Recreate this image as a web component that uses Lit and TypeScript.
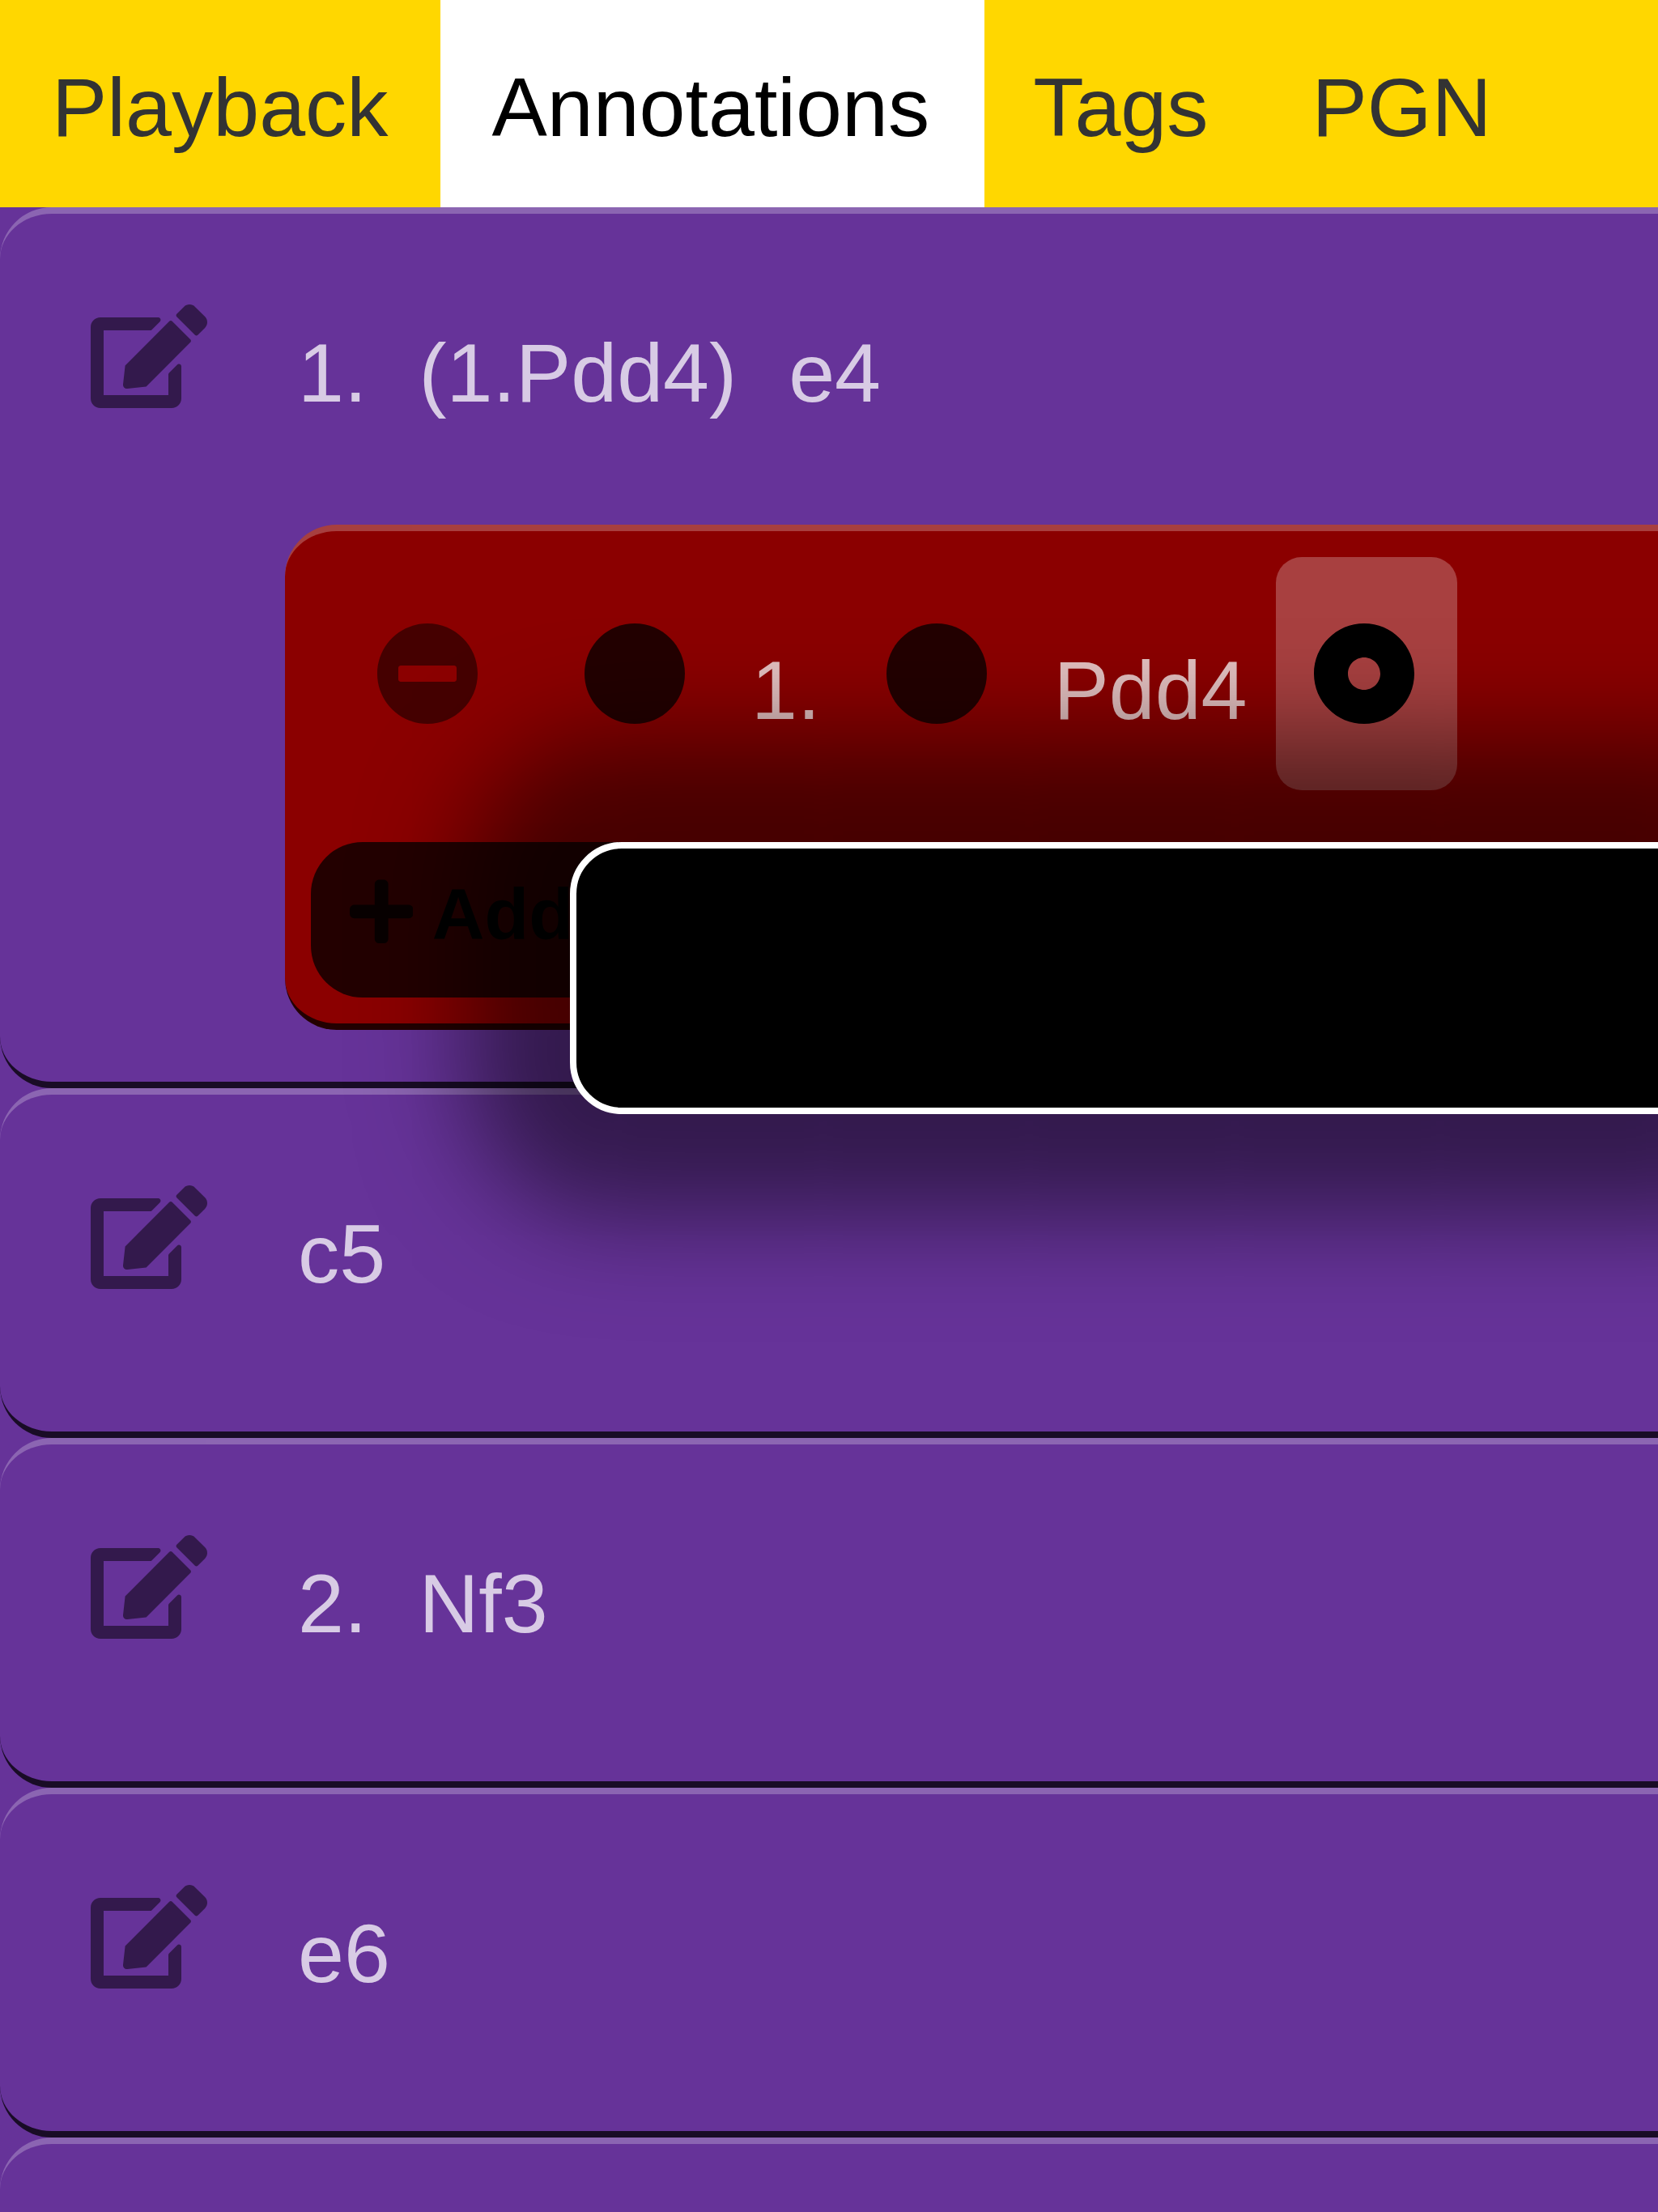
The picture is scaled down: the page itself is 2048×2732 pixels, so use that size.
import { LitElement, html, css, svg, nothing } from "lit";
import { customElement, property } from "lit/decorators.js";

const ICONS = {
  edit: {
    width: 576,
    path: "M402.6 83.2l90.2 90.2c3.8 3.8 3.8 10 0 13.8L274.4 405.6l-92.8 10.3c-12.4 1.4-22.9-9.1-21.5-21.5l10.3-92.8L388.8 83.2c3.8-3.8 10-3.8 13.8 0zm162-22.9l-48.8-48.8c-15.2-15.2-39.9-15.2-55.2 0l-35.4 35.4c-3.8 3.8-3.8 10 0 13.8l90.2 90.2c3.8 3.8 10 3.8 13.8 0l35.4-35.4c15.2-15.3 15.2-40 0-55.2zM384 346.2V448H64V128h229.8c3.2 0 6.2-1.3 8.5-3.5l40-40c7.6-7.6 2.2-20.5-8.5-20.5H48C21.5 64 0 85.5 0 112v352c0 26.5 21.5 48 48 48h352c26.5 0 48-21.5 48-48V306.2c0-10.7-12.9-16-20.5-8.5l-40 40c-2.2 2.3-3.5 5.3-3.5 8.5z",
  },
  minus: {
    width: 512,
    path: "M256 8C119 8 8 119 8 256s111 248 248 248 248-111 248-248S393 8 256 8zM124 296c-6.6 0-12-5.4-12-12v-56c0-6.6 5.4-12 12-12h264c6.6 0 12 5.4 12 12v56c0 6.6-5.4 12-12 12H124z",
  },
  circle: {
    width: 512,
    path: "M256 8C119 8 8 119 8 256s111 248 248 248 248-111 248-248S393 8 256 8z",
  },
  dot: {
    width: 512,
    path: "M256 8C119 8 8 119 8 256s111 248 248 248 248-111 248-248S393 8 256 8zm80 248c0 44.1-35.9 80-80 80s-80-35.9-80-80 35.9-80 80-80 80 35.9 80 80z",
  },
  plus: {
    width: 448,
    path: "M416 208H272V64c0-17.67-14.33-32-32-32h-32c-17.67 0-32 14.33-32 32v144H32c-17.67 0-32 14.33-32 32v32c0 17.67 14.33 32 32 32h144v144c0 17.67 14.33 32 32 32h32c17.67 0 32-14.33 32-32V304h144c17.67 0 32-14.33 32-32v-32c0-17.67-14.33-32-32-32z",
  },
};

@customElement("glyph-icon")
class GlyphIcon extends LitElement {
  static styles = css`
    :host {
      display: block;
      flex: none;
      height: 128px;
    }
    .glyph {
      display: block;
      height: 100%;
      fill: currentColor;
    }
  `;

  @property() name: keyof typeof ICONS = "circle";

  render() {
    const icon = ICONS[this.name];
    return html`<svg class="glyph" viewBox="0 0 ${icon.width} 512">
      ${svg`<path fill-rule="evenodd" d=${icon.path}></path>`}
    </svg>`;
  }
}

interface Move {
  parts: string[];
  variation?: boolean;
}

const MOVES: Move[] = [
  { parts: ["1.", "(1.Pdd4)", "e4"], variation: true },
  { parts: ["c5"] },
  { parts: ["2.", "Nf3"] },
  { parts: ["e6"] },
  { parts: [] },
];

@customElement("app-root")
class AppRoot extends LitElement {
  static styles = css`
    :host {
      display: block;
      font-family: "Liberation Sans", Arial, sans-serif;
      font-size: 102.4px;
    }
    .page {
      display: flex;
      flex-direction: column;
      height: 2732px;
      overflow: hidden;
      background: #663399;
    }
    .tabs {
      display: flex;
      flex: none;
      height: 256px;
      background: #ffd700;
    }
    .tab {
      box-sizing: border-box;
      flex: none;
      height: 256px;
      padding: 9px 60px 0 64px;
      line-height: 247px;
      color: #333;
      white-space: nowrap;
    }
    .tab.first {
      width: 544px;
      padding-right: 0;
    }
    .tab.active {
      width: 672px;
      padding-left: 63.4px;
      padding-right: 0;
      background: #fff;
      color: #000;
    }
    .tab.after {
      padding-left: 60.2px;
      padding-right: 64px;
    }
    .moves {
      position: relative;
      width: 2240px;
    }
    .move {
      box-sizing: border-box;
      height: 432px;
      border: 0 solid transparent;
      border-top: 8px solid rgba(255, 255, 255, 0.25);
      border-bottom: 8px solid rgba(0, 0, 0, 0.75);
      border-radius: 64px;
    }
    .move.expanded {
      height: 1088px;
    }
    .line {
      display: flex;
      align-items: flex-start;
      gap: 64px;
      height: 384px;
      padding-left: 112px;
    }
    .line .text {
      color: rgba(255, 255, 255, 0.75);
      line-height: 118px;
      padding-top: 138px;
      white-space: nowrap;
    }
    .edit {
      padding-top: 112px;
      margin-right: 48px;
      color: rgba(0, 0, 0, 0.5);
    }
    .variation {
      box-sizing: border-box;
      height: 624px;
      margin-left: 352px;
      background: #8b0000;
      border: 0 solid transparent;
      border-top: 8px solid rgba(255, 255, 255, 0.25);
      border-bottom: 8px solid rgba(0, 0, 0, 0.75);
      border-radius: 64px;
      padding: 32px;
      display: flex;
      flex-direction: column;
      justify-content: space-between;
    }
    .editor {
      display: flex;
      align-items: flex-start;
    }
    .editor .text {
      color: rgba(255, 255, 255, 0.75);
      line-height: 118px;
      padding-top: 106px;
      white-space: nowrap;
    }
    .tool {
      flex: none;
      padding: 80px 48px;
      color: rgba(0, 0, 0, 0.75);
    }
    .tool.remove {
      margin: 0 32px;
      color: rgba(0, 0, 0, 0.5);
    }
    .tool.pick {
      margin-right: 32px;
    }
    .tool.side {
      margin: 0 32px;
    }
    .tool.open {
      margin-left: 35.2px;
      padding-left: 45px;
      padding-right: 51px;
      border-radius: 32px;
      background: rgba(255, 255, 255, 0.25);
      color: #000;
    }
    .add {
      box-sizing: border-box;
      display: flex;
      align-items: flex-start;
      width: 480px;
      height: 192px;
      padding: 36px 48px 0;
      gap: 23.4px;
      border-radius: 64px;
      background: rgba(0, 0, 0, 0.75);
      font-size: 89.6px;
      font-weight: bold;
      color: #000;
    }
    .add glyph-icon {
      height: 89.6px;
      margin-top: 5.4px;
      color: rgba(0, 0, 0, 0.75);
    }
    .add .label {
      line-height: 104px;
      padding-top: 1px;
    }
    .popup {
      box-sizing: border-box;
      position: absolute;
      left: 704px;
      top: 784px;
      width: 1536px;
      height: 336px;
      border: 8px solid #fff;
      border-radius: 64px;
      background: #000;
      box-shadow: 0 0 128px 128px rgba(0, 0, 0, 0.5);
    }
  `;

  private variation() {
    return html`<div class="variation">
      <div class="editor">
        <div class="tool remove"><glyph-icon name="minus"></glyph-icon></div>
        <div class="tool pick"><glyph-icon name="circle"></glyph-icon></div>
        <span class="text">1.</span>
        <div class="tool side"><glyph-icon name="circle"></glyph-icon></div>
        <span class="text">Pdd4</span>
        <div class="tool open"><glyph-icon name="dot"></glyph-icon></div>
      </div>
      <div class="add"><glyph-icon name="plus"></glyph-icon><span class="label">Add</span></div>
    </div>`;
  }

  render() {
    return html`<div class="page">
      <nav class="tabs">
        <div class="tab first">Playback</div>
        <div class="tab active">Annotations</div>
        <div class="tab after">Tags</div>
        <div class="tab">PGN</div>
      </nav>
      <div class="moves">
        ${MOVES.map(
          (move) => html`<div class="move ${move.variation ? "expanded" : ""}">
            <div class="line">
              <glyph-icon class="edit" name="edit"></glyph-icon>
              ${move.parts.map((part) => html`<span class="text">${part}</span>`)}
            </div>
            ${move.variation ? this.variation() : nothing}
          </div>`
        )}
        <div class="popup"></div>
      </div>
    </div>`;
  }
}
